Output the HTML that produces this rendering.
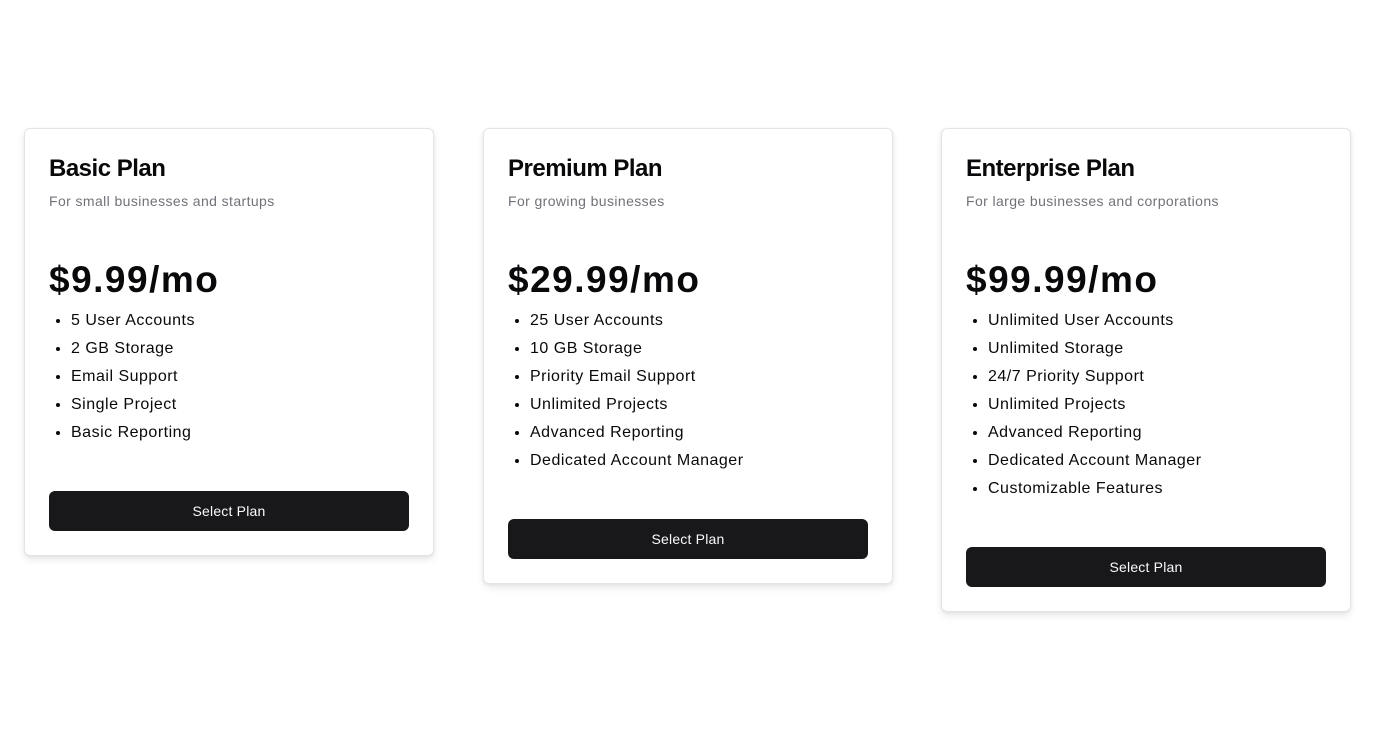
<!DOCTYPE html>
<html><head><style>
*{box-sizing:border-box;margin:0;padding:0}
body{width:1376px;height:740px;background:#fff;font-family:"Liberation Sans",sans-serif;color:#09090b;position:relative}
.card{position:absolute;top:128px;width:410px;border:1px solid #e4e4e7;border-radius:6px;background:#fff;box-shadow:0 4px 8px rgba(0,0,0,.08),0 1px 3px rgba(0,0,0,.06);padding:24px}
h2{font-size:24px;font-weight:700;line-height:32px;margin-top:0;letter-spacing:-.5px}
.sub{font-size:14px;color:#71717a;line-height:20px;margin-top:6px;letter-spacing:.4px}
.price{font-size:37px;font-weight:700;line-height:40px;margin-top:49px;letter-spacing:1.5px}
ul{margin-top:7px;padding-left:22px;font-size:16px;line-height:28px;letter-spacing:.5px}
button{display:block;width:100%;height:40px;margin-top:44px;background:#18181b;color:#fafafa;border:0;border-radius:6px;font-family:"Liberation Sans",sans-serif;font-size:14px;font-weight:500;letter-spacing:.2px}
</style></head><body>
<div class="card" style="left:24px">
<h2>Basic Plan</h2><div class="sub">For small businesses and startups</div>
<div class="price">$9.99/mo</div>
<ul><li>5 User Accounts</li><li>2 GB Storage</li><li>Email Support</li><li>Single Project</li><li>Basic Reporting</li></ul>
<button>Select Plan</button></div>
<div class="card" style="left:483px">
<h2>Premium Plan</h2><div class="sub">For growing businesses</div>
<div class="price">$29.99/mo</div>
<ul><li>25 User Accounts</li><li>10 GB Storage</li><li>Priority Email Support</li><li>Unlimited Projects</li><li>Advanced Reporting</li><li>Dedicated Account Manager</li></ul>
<button>Select Plan</button></div>
<div class="card" style="left:941px">
<h2>Enterprise Plan</h2><div class="sub">For large businesses and corporations</div>
<div class="price">$99.99/mo</div>
<ul><li>Unlimited User Accounts</li><li>Unlimited Storage</li><li>24/7 Priority Support</li><li>Unlimited Projects</li><li>Advanced Reporting</li><li>Dedicated Account Manager</li><li>Customizable Features</li></ul>
<button>Select Plan</button></div>
</body></html>
